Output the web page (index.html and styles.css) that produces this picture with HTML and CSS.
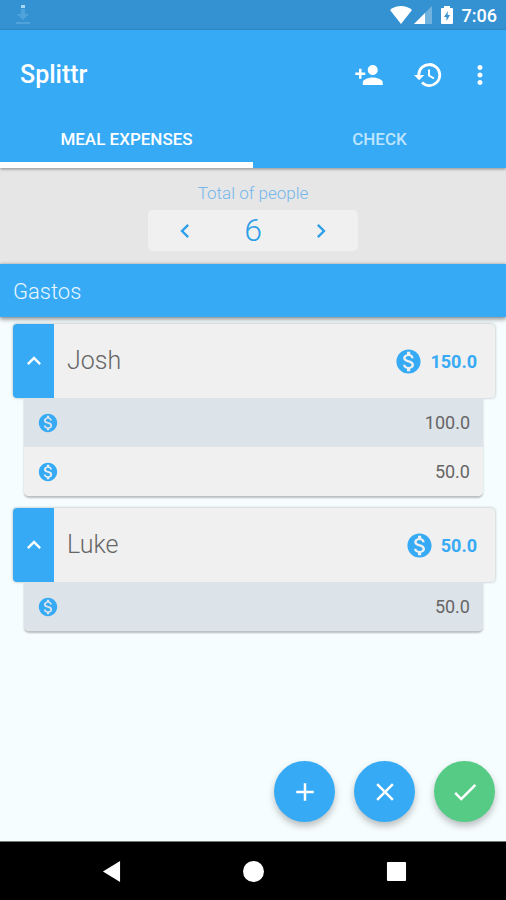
FILE: index.html
```html
<!DOCTYPE html>
<html lang="en">
<head>
<meta charset="utf-8">
<meta name="viewport" content="width=device-width, initial-scale=1">
<title>Splittr</title>
<link rel="stylesheet" href="styles.css">
</head>
<body>
<svg class="sprite" aria-hidden="true">
  <symbol id="coin" viewBox="0 0 24 24"><path d="M12 2C6.48 2 2 6.48 2 12s4.48 10 10 10 10-4.48 10-10S17.52 2 12 2zm1.41 16.09V20h-2.67v-1.93c-1.71-.36-3.16-1.46-3.27-3.4h1.96c.1 1.05.82 1.87 2.65 1.87 1.96 0 2.4-.98 2.4-1.59 0-.83-.44-1.61-2.67-2.14-2.48-.6-4.18-1.62-4.18-3.67 0-1.72 1.39-2.84 3.11-3.21V4h2.67v1.95c1.86.45 2.79 1.86 2.85 3.39H14.3c-.05-1.11-.64-1.87-2.22-1.87-1.5 0-2.4.68-2.4 1.64 0 .84.65 1.39 2.67 1.91s4.18 1.39 4.18 3.91c-.01 1.83-1.38 2.83-3.12 3.16z"/></symbol>
  <symbol id="up" viewBox="0 0 24 24"><path d="M12 8l-6 6 1.41 1.41L12 10.83l4.59 4.58L18 14z"/></symbol>
</svg>

<div class="status">
  <svg class="download" viewBox="0 0 14 20" aria-hidden="true"><rect class="tip" x="5" y="0" width="4" height="3"/><path d="M5 4h4v5h4l-6 6-6-6h4zM0 17h14v2H0z"/></svg>
  <div class="status-right">
    <svg class="wifi" viewBox="0 0 22 18" aria-hidden="true"><path d="M11 18L0 4C3 1.500 7 0 11 0s8 1.500 11 4z"/></svg>
    <svg class="signal" viewBox="0 0 18 18" aria-hidden="true"><path class="faint" d="M18 0v18H0z"/><path d="M11 7v11H0z"/></svg>
    <svg class="battery" viewBox="0 0 12 18" aria-hidden="true"><path fill-rule="evenodd" d="M3 0h6v2h2a1 1 0 0 1 1 1v14a1 1 0 0 1-1 1H1a1 1 0 0 1-1-1V3a1 1 0 0 1 1-1h2zM7 5l-4 6h2.500v4L9 9H6.500z"/></svg>
    <time>7:06</time>
  </div>
</div>

<header class="top">
  <div class="appbar">
    <h1>Splittr</h1>
    <div class="actions">
      <button aria-label="Add person"><svg viewBox="0 0 24 24"><path d="M15 12c2.210 0 4-1.790 4-4s-1.790-4-4-4-4 1.790-4 4 1.790 4 4 4zm-9-2V7H4v3H1v2h3v3h2v-3h3v-2H6zm9 4c-2.670 0-8 1.340-8 4v2h16v-2c0-2.660-5.330-4-8-4z"/></svg></button>
      <button aria-label="History"><svg viewBox="0 0 24 24"><path d="M13 2.500A9.500 9.500 0 0 0 3.500 12H.8l4.100 4.200L9 12H5.700A7.300 7.300 0 1 1 13 19.300c-1.900 0-3.700-.8-5-2.100l-1.600 1.600A9.500 9.500 0 1 0 13 2.500zM12 7.500v5.300l4.400 2.600.8-1.300-3.600-2.200V7.500H12z"/></svg></button>
      <button class="more" aria-label="More options"><svg viewBox="0 0 24 24"><path d="M12 8c1.100 0 2-.9 2-2s-.9-2-2-2-2 .9-2 2 .9 2 2 2zm0 2c-1.100 0-2 .9-2 2s.9 2 2 2 2-.9 2-2-.9-2-2-2zm0 6c-1.100 0-2 .9-2 2s.9 2 2 2 2-.9 2-2-.9-2-2-2z"/></svg></button>
    </div>
  </div>
  <nav class="tabs">
    <a class="active" href="#meal" aria-current="page">MEAL EXPENSES</a>
    <a href="#check">CHECK</a>
  </nav>
</header>

<section class="people">
  <p>Total of people</p>
  <div class="stepper">
    <button aria-label="Fewer people"><svg viewBox="0 0 24 24"><path d="M15.410 7.410L14 6l-6 6 6 6 1.410-1.410L10.830 12z"/></svg></button>
    <output>6</output>
    <button aria-label="More people"><svg viewBox="0 0 24 24"><path d="M10 6L8.590 7.410 13.170 12l-4.580 4.590L10 18l6-6z"/></svg></button>
  </div>
</section>

<h2 class="section-title">Gastos</h2>

<main id="meal">
  <article class="person">
    <div class="card">
      <button class="toggle" aria-label="Collapse Josh"><svg viewBox="0 0 24 24"><use href="#up"/></svg></button>
      <h3>Josh</h3>
      <div class="total"><svg viewBox="0 0 24 24" aria-hidden="true"><use href="#coin"/></svg><span>150.0</span></div>
    </div>
    <ul class="expenses">
      <li><svg viewBox="0 0 24 24" aria-hidden="true"><use href="#coin"/></svg><span>100.0</span></li>
      <li><svg viewBox="0 0 24 24" aria-hidden="true"><use href="#coin"/></svg><span>50.0</span></li>
    </ul>
  </article>
  <article class="person">
    <div class="card">
      <button class="toggle" aria-label="Collapse Luke"><svg viewBox="0 0 24 24"><use href="#up"/></svg></button>
      <h3>Luke</h3>
      <div class="total"><svg viewBox="0 0 24 24" aria-hidden="true"><use href="#coin"/></svg><span>50.0</span></div>
    </div>
    <ul class="expenses">
      <li><svg viewBox="0 0 24 24" aria-hidden="true"><use href="#coin"/></svg><span>50.0</span></li>
    </ul>
  </article>
  <div class="fabs">
    <button aria-label="Add expense"><svg viewBox="0 0 24 24"><path d="M19 13h-6v6h-2v-6H5v-2h6V5h2v6h6v2z"/></svg></button>
    <button aria-label="Clear"><svg viewBox="0 0 24 24"><path d="M19 6.410L17.590 5 12 10.590 6.410 5 5 6.410 10.590 12 5 17.590 6.410 19 12 13.410 17.590 19 19 17.590 13.410 12z"/></svg></button>
    <button class="confirm" aria-label="Confirm"><svg viewBox="0 0 24 24"><path d="M9 16.170L4.830 12l-1.420 1.410L9 19 21 7l-1.410-1.410z"/></svg></button>
  </div>
</main>

<footer class="navbar">
  <button aria-label="Back"><svg viewBox="0 0 22 22"><path d="M20 0v22L2 11z"/></svg></button>
  <button aria-label="Home"><svg viewBox="0 0 22 22"><circle cx="11" cy="11" r="11"/></svg></button>
  <button aria-label="Recent apps"><svg viewBox="0 0 22 22"><rect x="1" y="1" width="20" height="20" rx="1"/></svg></button>
</footer>
</body>
</html>
```
FILE: styles.css
```css
:root {
  --blue: #36aaf5;
  --grey: #f0f0f0;
}

* {
  box-sizing: border-box;
}

body {
  margin: 0;
  min-height: 100vh;
  display: flex;
  flex-direction: column;
  background: #f6fdff;
  font-family: Roboto, "Liberation Sans", sans-serif;
  color: #666;
}

h1, h2, h3, p, ul {
  margin: 0;
  padding: 0;
}

button {
  display: flex;
  align-items: center;
  justify-content: center;
  padding: 0;
  border: 0;
  background: none;
  color: inherit;
}

svg {
  display: block;
  fill: currentColor;
}

.sprite {
  position: absolute;
  width: 0;
  height: 0;
}

/* Status bar */
.status {
  display: flex;
  align-items: center;
  justify-content: space-between;
  height: 30px;
  padding: 0 9px 0 16px;
  background: #3492d2;
  color: #fff;
}

.download {
  width: 14px;
  height: 20px;
  color: #4fa2da;
}

.tip {
  fill: #a5d8f8;
}

.status-right {
  display: flex;
  align-items: center;
}

.wifi {
  width: 22px;
  height: 18px;
}

.signal {
  width: 18px;
  height: 18px;
  margin: 0 9px 0 2px;
}

.faint {
  opacity: .3;
}

.battery {
  width: 12px;
  height: 18px;
}

time {
  margin-left: 9px;
  font-size: 18px;
  font-weight: 500;
}

/* App bar and tabs */
.top {
  position: relative;
  background: var(--blue);
  color: #fff;
  box-shadow: 0 1px 3px rgba(0, 0, 0, .4);
}

.appbar {
  display: flex;
  align-items: center;
  justify-content: space-between;
  height: 89px;
  padding: 0 11px 0 20px;
}

h1 {
  font-size: 25px;
  font-weight: 500;
}

.actions {
  display: flex;
  gap: 29px;
}

.actions svg {
  width: 30px;
  height: 30px;
}

.more {
  margin-left: -7px;
}

.tabs {
  display: grid;
  grid-template-columns: 1fr 1fr;
  height: 49px;
}

.tabs a {
  padding-top: 9px;
  border-bottom: 6px solid transparent;
  color: #bde5ff;
  font-size: 17px;
  font-weight: 500;
  line-height: 22px;
  text-align: center;
  text-decoration: none;
}

.tabs .active {
  border-color: #fff;
  color: #fff;
}

/* People counter */
.people {
  display: flex;
  flex-direction: column;
  align-items: center;
  gap: 6px;
  padding: 14px 0 13px;
  background: #e6e6e6;
}

.people p {
  color: #74b7ec;
  font-size: 17px;
  font-weight: 300;
  line-height: 22px;
}

.stepper {
  display: grid;
  grid-template-columns: 1fr 62px 1fr;
  align-items: center;
  width: 210px;
  height: 41px;
  border-radius: 5px;
  background: var(--grey);
  color: #2c9fe8;
}

.stepper svg {
  width: 28px;
  height: 28px;
}

output {
  font-size: 32px;
  font-weight: 300;
  line-height: 41px;
  text-align: center;
}

.section-title {
  position: relative;
  padding: 2px 13px 0;
  background: var(--blue);
  box-shadow: 0 0 3px rgba(0, 0, 0, .3), 0 3px 4px rgba(0, 0, 0, .3);
  color: #e8f7ff;
  font-size: 22px;
  font-weight: 300;
  line-height: 51px;
}

/* Expense list */
main {
  flex: 1;
  display: flex;
  flex-direction: column;
  gap: 12px;
  padding: 7px 11px 19px 13px;
}

.card {
  display: flex;
  align-items: center;
  height: 74px;
  border-radius: 4px;
  background: var(--grey);
  box-shadow: 0 0 3px rgba(0, 0, 0, .3);
}

.toggle {
  align-self: stretch;
  width: 41px;
  border-radius: 4px 0 0 4px;
  background: var(--blue);
  color: #fff;
}

.toggle svg {
  width: 28px;
  height: 28px;
}

h3 {
  flex: 1;
  padding-left: 13px;
  font-size: 25px;
  font-weight: 300;
  line-height: 30px;
}

.total {
  display: flex;
  align-items: center;
  gap: 7px;
  padding-right: 18px;
  color: var(--blue);
  font-size: 18px;
  font-weight: 700;
}

.total svg {
  width: 29px;
  height: 29px;
}

.expenses {
  position: relative;
  margin: 0 12px 0 11px;
  overflow: hidden;
  border-radius: 0 0 5px 5px;
  list-style: none;
  box-shadow: 0 2px 2px rgba(0, 0, 0, .25);
}

.expenses li {
  display: flex;
  align-items: center;
  justify-content: space-between;
  height: 49px;
  padding: 0 13px;
  background: var(--grey);
  font-size: 18px;
}

.expenses li:nth-child(odd) {
  background: #dce3e9;
}

.expenses svg {
  width: 22px;
  height: 22px;
  color: var(--blue);
}

/* Floating actions */
.fabs {
  display: flex;
  justify-content: flex-end;
  gap: 19px;
  margin-top: auto;
}

.fabs button {
  width: 61px;
  height: 61px;
  border-radius: 50%;
  background: var(--blue);
  box-shadow: 0 4px 7px rgba(0, 0, 0, .25);
  color: #fff;
}

.fabs .confirm {
  background: #56cb86;
}

.fabs svg {
  width: 30px;
  height: 30px;
}

/* System navigation */
.navbar {
  display: grid;
  grid-template-columns: repeat(3, 1fr);
  height: 59px;
  padding: 0 38px 0 40px;
  border-top: 1px solid #777;
  background: #000;
  color: #fff;
}

.navbar svg {
  width: 21px;
  height: 21px;
}
```
